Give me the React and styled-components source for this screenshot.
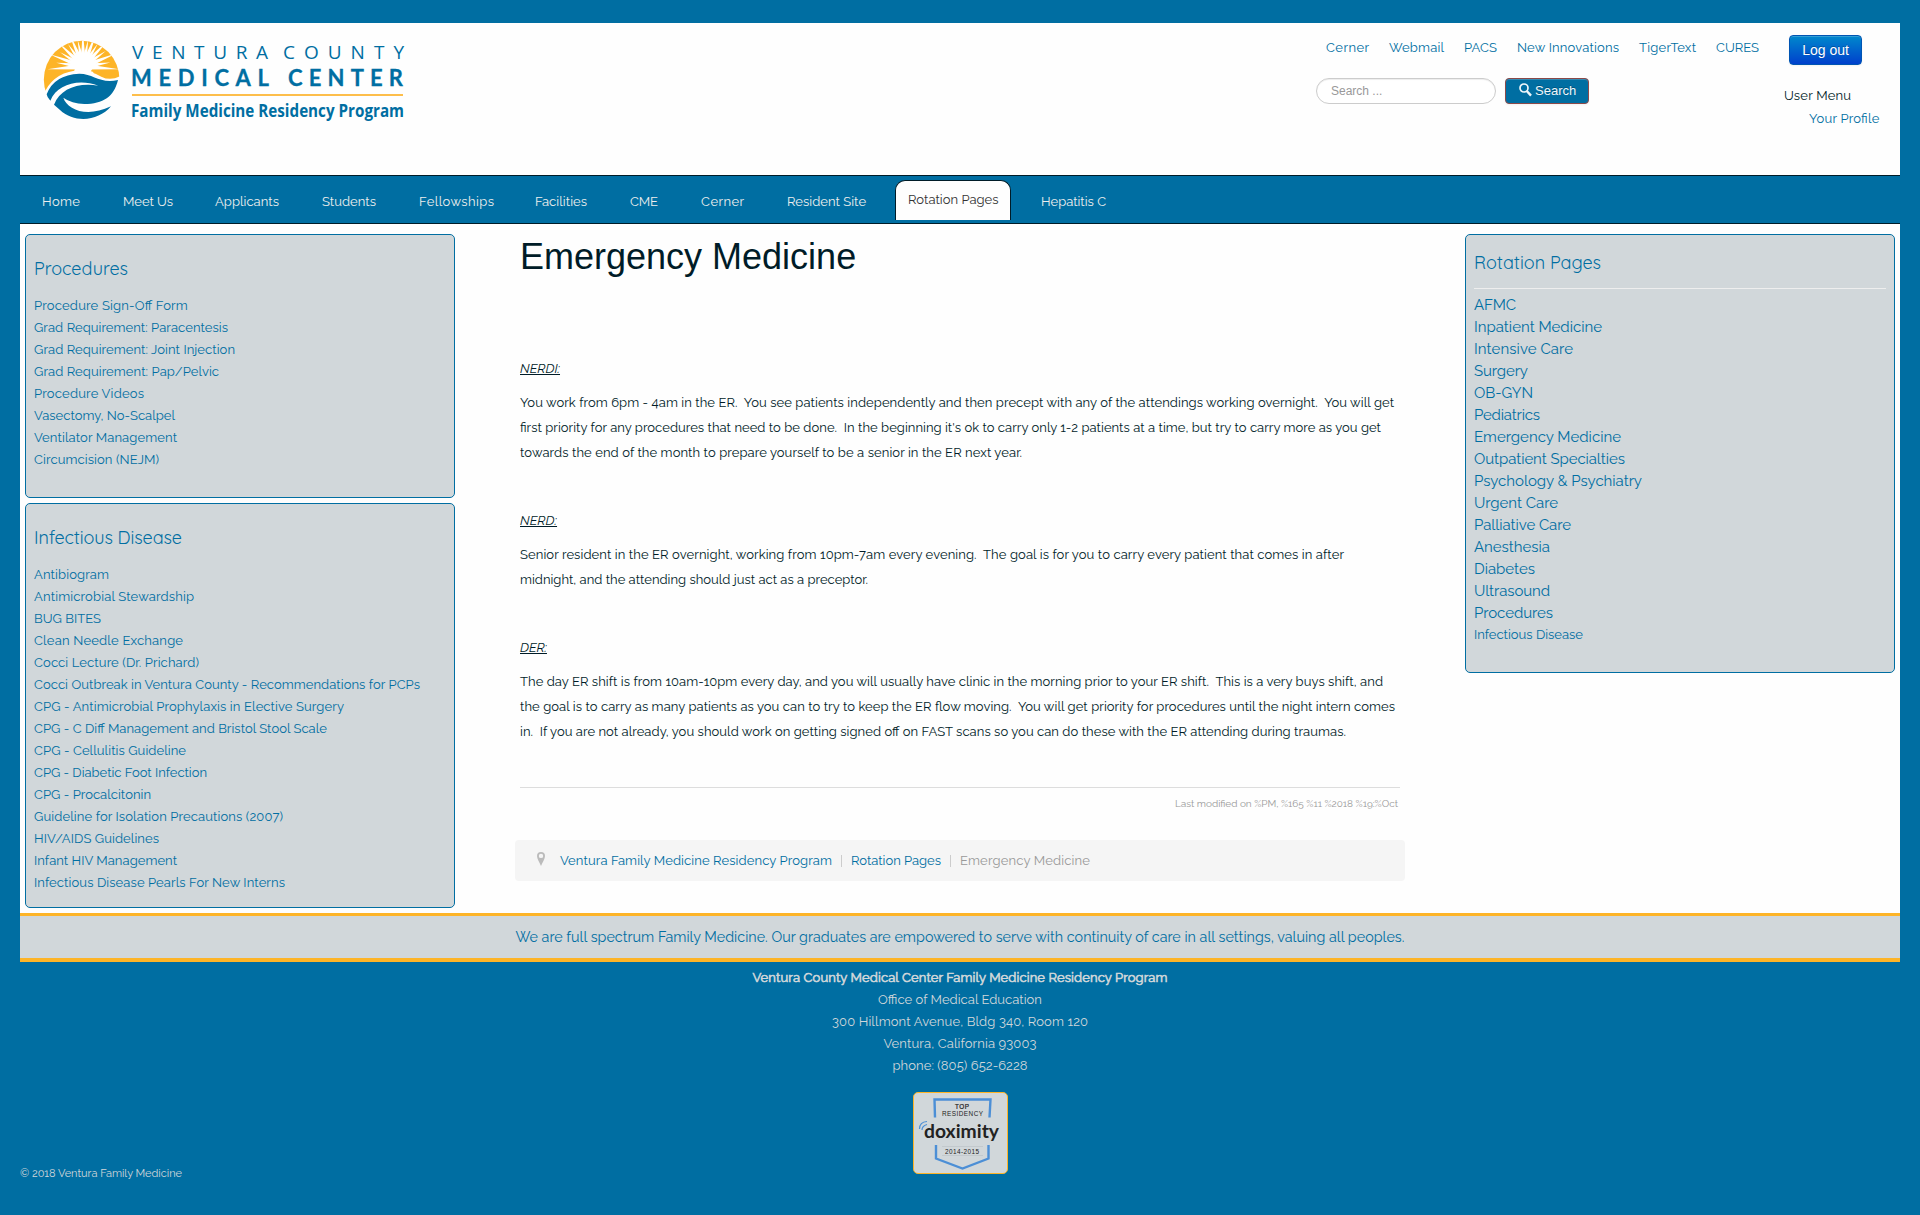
import React, { useLayoutEffect, useRef, useState } from 'react';
import styled, { createGlobalStyle, css } from 'styled-components';

const blue = '#006ea2';
const panel = '#d1d7da';
const gold = '#fdb427';
const ink = '#001c28';
const sans = "Raleway, Lato, 'Open Sans', sans-serif";
const arial = "'Liberation Sans', Arial, sans-serif";

const Global = createGlobalStyle`
  * { box-sizing: border-box; }
  html { background: ${blue}; }
  body { margin: 0; background: ${blue}; color: ${ink}; font: 13px/22px ${sans}; }
  h1, h2, p, ul { margin: 0; padding: 0; font-weight: 400; }
  ul { list-style: none; }
  a { color: ${blue}; text-decoration: none; white-space: nowrap; }
`;

const FitSpan = styled.span`
  display: inline-block;
  white-space: pre;
  font-feature-settings: 'liga' 1;
`;

/* Tracks a run of text out (or in) so that it fills a given measure. */
function Fit({ w, children }) {
  const ref = useRef(null);
  const [spacing, setSpacing] = useState(0);
  useLayoutEffect(() => {
    const el = ref.current;
    el.style.letterSpacing = '0px';
    const natural = el.getBoundingClientRect().width;
    const next = (w - natural) / (children.length - 1);
    el.style.letterSpacing = `${next}px`;
    setSpacing(next);
  }, [w, children]);
  return (
    <FitSpan ref={ref} style={{ letterSpacing: spacing, marginRight: -spacing }}>
      {children}
    </FitSpan>
  );
}

const Page = styled.div`
  padding: 23px 20px 0;
  height: 1215px;
  overflow: hidden;
`;

const Header = styled.header`
  display: flex;
  height: 152px;
  background: #fefefe;
`;
const LogoBox = styled.div`
  width: 1296px;
  padding: 12px 0 0 20px;
  svg { display: block; overflow: visible; }
`;
const Tools = styled.div`
  width: 468px;
  padding-top: 13px;
`;
const QuickLinks = styled.nav`
  display: flex;
  gap: 20px;
  padding-left: 10px;
  height: 22px;
  line-height: 24px;
`;
const SearchForm = styled.div`
  display: flex;
  gap: 9px;
  margin-top: 20px;
`;
const SearchInput = styled.input`
  width: 180px;
  height: 26px;
  padding: 0 14px;
  border: 1px solid #ccc;
  border-radius: 14px;
  background: #fff;
  box-shadow: inset 0 1px 1px rgba(0, 0, 0, 0.075);
  font: 12px ${arial};
  &::placeholder { color: #999; }
`;
const SearchButton = styled.button`
  display: flex;
  align-items: center;
  gap: 3px;
  width: 84px;
  height: 26px;
  padding: 0 0 1px 13px;
  border: 1px solid #8c4a4a;
  border-radius: 4px;
  background: ${blue};
  box-shadow: inset 0 1px 0 rgba(255, 255, 255, 0.2), 0 1px 2px rgba(0, 0, 0, 0.05);
  color: #eef6fa;
  font: 13px ${arial};
  text-shadow: 0 -1px 0 rgba(0, 0, 0, 0.25);
  svg { margin-top: -2px; }
`;
const Account = styled.div`
  display: flex;
  flex-direction: column;
  align-items: flex-start;
  padding-top: 12px;
`;
const LogoutButton = styled.button`
  width: 73px;
  height: 30px;
  margin-left: 5px;
  padding: 0;
  border: 1px solid #0055b3;
  border-radius: 4px;
  background: linear-gradient(#0088cc, #0040cc);
  box-shadow: inset 0 1px 0 rgba(255, 255, 255, 0.2), 0 1px 2px rgba(0, 0, 0, 0.05);
  color: #fff;
  font: 14px ${arial};
  text-shadow: 0 -1px 0 rgba(0, 0, 0, 0.25);
`;
const UserMenu = styled.div`
  margin-top: 19px;
  line-height: 23px;
  div + div { padding-left: 25px; }
`;

const MainNav = styled.nav`
  display: flex;
  align-items: flex-start;
  height: 49px;
  padding-left: 22px;
  border-top: 1px solid ${ink};
  border-bottom: 1px solid ${ink};
`;
const NavItem = styled.a`
  display: block;
  margin-right: ${(p) => p.$gap}px;
  padding-top: 15px;
  color: #eee;
  ${(p) =>
    p.$active &&
    css`
      width: 116px;
      height: 40px;
      margin-top: 4px;
      padding: 8px 0 0 12px;
      border: 1px solid ${ink};
      border-bottom: 0;
      border-radius: 10px 10px 0 0;
      background: #fefefe;
      color: #333;
    `}
`;

const Body = styled.main`
  display: grid;
  grid-template-columns: 430px 890px 430px;
  justify-content: space-between;
  height: 689px;
  padding: 10px 5px 0;
  background: #fefefe;
`;
const Column = styled.div`
  display: flex;
  flex-direction: column;
  gap: 5px;
`;
const Panel = styled.section`
  height: ${(p) => p.$h}px;
  padding: ${(p) => (p.$ruled ? 15 : 21)}px 8px 0;
  border: 1px solid ${blue};
  border-radius: 5px;
  background: ${panel};
`;
const PanelTitle = styled.h2`
  height: ${(p) => (p.$ruled ? 39 : 38)}px;
  margin-bottom: ${(p) => (p.$ruled ? 4 : 0)}px;
  border-bottom: ${(p) => (p.$ruled ? '1px solid #eee' : '0')};
  color: ${blue};
  font-family: Quicksand, Lato, sans-serif;
  font-size: 18px;
  line-height: 26px;
`;
const Item = styled.li`
  height: 22px;
  font-size: ${(p) => (p.$large ? 15 : 13)}px;
  line-height: 24px;
`;

const Article = styled.article`
  padding: 0 5px;
`;
const Title = styled.h1`
  height: 122px;
  color: ${ink};
  font: 36px/45px ${arial};
`;
const Shift = styled.h2`
  margin-top: ${(p) => (p.$first ? 0 : 43)}px;
  font-size: 13px;
  font-style: italic;
  line-height: 25px;
  span { text-decoration: underline; }
`;
const Para = styled.p`
  padding-top: 9px;
  line-height: 25px;
`;
const Line = styled.span`
  display: block;
  height: 25px;
`;
const Modified = styled.div`
  height: 28px;
  margin-top: 43px;
  padding: 5px 2px 0 0;
  border-top: 1px solid #ddd;
  color: #999;
  font-size: 10px;
  text-align: right;
`;
const Crumbs = styled.div`
  display: flex;
  align-items: center;
  height: 41px;
  margin: 25px -5px 0;
  padding: 1px 0 0 22px;
  border-radius: 4px;
  background: #f5f5f5;
  color: #999;
  svg { margin: -5px 15px 0 0; }
`;
const Bar = styled.i`
  width: 1px;
  height: 12px;
  margin: 0 9px;
  background: #ccc;
`;

const Motto = styled.div`
  height: 49px;
  border-top: 3px solid ${gold};
  border-bottom: 4px solid ${gold};
  background: ${panel};
  color: ${blue};
  font-size: 14.3px;
  line-height: 42px;
  text-align: center;
`;
const Address = styled.address`
  padding-top: 5px;
  color: #d1d7da;
  font-style: normal;
  text-align: center;
`;
const Program = styled.div`
  -webkit-text-stroke: 0.6px #d1d7da;
`;
const Badge = styled.div`
  width: 95px;
  height: 82px;
  margin: 15px auto 0;
  border: 1px solid ${gold};
  border-radius: 5px;
  background: ${panel};
  svg { display: block; }
`;
const Copyright = styled.div`
  margin-top: -11px;
  color: #d1d7da;
  font-size: 11px;
`;

const rayAngles = [-4, 9, 22, 35, 47, 58, 69, 80, 91, 102, 113, 124, 136, 148, 160, 172, 184];

function Logo() {
  return (
    <svg width="390" height="100" viewBox="40 35 390 100">
      <svg x="30" y="30" width="100" height="100" viewBox="0 0 300 300">
        <clipPath id="disc"><ellipse cx="155" cy="149" rx="113.5" ry="117" /></clipPath>
        <g clipPath="url(#disc)">
          <path d="M30 20H280V133Q245 156 214 140Q182 122 150 121Q78 124 46 182H30Z" fill={gold} />
          <circle cx="160" cy="106" r="29" fill="#fff" />
          {rayAngles.map((a, i) => (
            <path
              key={a}
              transform={`translate(160 110) rotate(${-a})`}
              d={`M10 -8L${i % 2 ? 82 : 108} 0L10 8Z`}
              fill="#fff"
            />
          ))}
          <path d="M133 121Q160 112 190 126L190 140H130Z" fill="#fff" />
        </g>
        <path d="M50 193Q72 134 148 131C192 131 208 162 264 150C252 200 220 222 163 222Q125 221 100 203C112 239 170 264 243 229C206 273 135 281 90 240L72 224C91 178 140 157 205 167C145 145 81 163 61 212Q51 202 50 193Z" fill={blue} />
      </svg>
      <g fill={blue} fontFamily="'Open Sans', sans-serif">
        <text x="132" y="59" fontSize="19" textLength="136">VENTURA</text>
        <text x="283" y="59" fontSize="19" textLength="121">COUNTY</text>
        <text x="131" y="86" fontSize="22" fontWeight="700" fontFamily="Lato, sans-serif" stroke={blue} strokeWidth=".3" textLength="138">MEDICAL</text>
        <text x="288" y="86" fontSize="22" fontWeight="700" fontFamily="Lato, sans-serif" stroke={blue} strokeWidth=".3" textLength="115">CENTER</text>
        <text x="131" y="117" fontSize="17" fontWeight="700" textLength="273" lengthAdjust="spacingAndGlyphs">Family Medicine Residency Program</text>
      </g>
      <path d="M132 94H403V96H132Z" fill="#fdbe4b" />
    </svg>
  );
}

function Doximity() {
  return (
    <svg width="93" height="80" viewBox="914 1093 93 80">
      <g fill="none" stroke="#4c8fd6" strokeWidth="2.4">
        <path d="M935 1117.500L934.500 1099.500H990.500L989.500 1117.500" />
        <path d="M936 1145V1158.500L962.500 1168.500L988.500 1158.500V1145" />
        <path d="M919.500 1129Q919.500 1122 927 1121.500M922 1130Q922 1126 927 1124.500" strokeWidth="1.2" />
      </g>
      <g fill="#222" textAnchor="middle" fontFamily="'Liberation Sans', Arial, sans-serif" fontSize="6.4">
        <text x="962" y="1109" stroke="#222" strokeWidth=".2" textLength="14">TOP</text>
        <text x="962.500" y="1116.300" textLength="41">RESIDENCY</text>
        <text x="962" y="1153.800" textLength="34">2014-2015</text>
      </g>
      <text x="924" y="1138" fontSize="19.5" fontWeight="700" fontFamily="Lato, sans-serif" fill="#222" textLength="75" lengthAdjust="spacingAndGlyphs">doximity</text>
      <path d="M942 1155.500H983M942 1146.500H983" stroke="#b9c0c4" strokeWidth=".6" />
    </svg>
  );
}

const quick = [['Cerner', 43], ['Webmail', 55], ['PACS', 33], ['New Innovations', 102], ['TigerText', 57], ['CURES', 43]];
const nav = [
  ['Home', 38, 43], ['Meet Us', 50, 42], ['Applicants', 64, 43], ['Students', 54, 43],
  ['Fellowships', 75, 41], ['Facilities', 52, 43], ['CME', 28, 43], ['Cerner', 43, 43],
  ['Resident Site', 79, 29], ['Rotation Pages', 90.5, 30, true], ['Hepatitis C', 65, 0],
];
const procedures = [
  ['Procedure Sign-Off Form', 154], ['Grad Requirement: Paracentesis', 194],
  ['Grad Requirement: Joint Injection', 201], ['Grad Requirement: Pap/Pelvic', 185],
  ['Procedure Videos', 110], ['Vasectomy, No-Scalpel', 141], ['Ventilator Management', 143],
  ['Circumcision (NEJM)', 125],
];
const infectious = [
  ['Antibiogram', 75], ['Antimicrobial Stewardship', 160], ['BUG BITES', 67],
  ['Clean Needle Exchange', 149], ['Cocci Lecture (Dr. Prichard)', 165],
  ['Cocci Outbreak in Ventura County - Recommendations for PCPs', 386],
  ['CPG - Antimicrobial Prophylaxis in Elective Surgery', 310],
  ['CPG - C Diff Management and Bristol Stool Scale', 293], ['CPG - Cellulitis Guideline', 152],
  ['CPG - Diabetic Foot Infection', 173], ['CPG - Procalcitonin', 117],
  ['Guideline for Isolation Precautions (2007)', 249], ['HIV/AIDS Guidelines', 125],
  ['Infant HIV Management', 143], ['Infectious Disease Pearls For New Interns', 251],
];
const rotations = [
  ['AFMC', 42], ['Inpatient Medicine', 128], ['Intensive Care', 99], ['Surgery', 54], ['OB-GYN', 59],
  ['Pediatrics', 66], ['Emergency Medicine', 147], ['Outpatient Specialties', 151],
  ['Psychology & Psychiatry', 168], ['Urgent Care', 84], ['Palliative Care', 97], ['Anesthesia', 76],
  ['Diabetes', 61], ['Ultrasound', 76], ['Procedures', 79], ['Infectious Disease', 109],
];
const shifts = [
  {
    name: 'NERDI:', w: 40,
    lines: [
      ['You work from 6pm - 4am in the ER.  You see patients independently and then precept with any of the attendings working overnight.  You will get', 874],
      ["first priority for any procedures that need to be done.  In the beginning it's ok to carry only 1-2 patients at a time, but try to carry more as you get", 861],
      ['towards the end of the month to prepare yourself to be a senior in the ER next year.', 502],
    ],
  },
  {
    name: 'NERD:', w: 37,
    lines: [
      ['Senior resident in the ER overnight, working from 10pm-7am every evening.  The goal is for you to carry every patient that comes in after', 824],
      ['midnight, and the attending should just act as a preceptor.', 348],
    ],
  },
  {
    name: 'DER:', w: 27,
    lines: [
      ['The day ER shift is from 10am-10pm every day, and you will usually have clinic in the morning prior to your ER shift.  This is a very buys shift, and', 863],
      ['the goal is to carry as many patients as you can to try to keep the ER flow moving.  You will get priority for procedures until the night intern comes', 875],
      ['in.  If you are not already, you should work on getting signed off on FAST scans so you can do these with the ER attending during traumas.', 826],
    ],
  },
];
const address = [
  ['Office of Medical Education', 164], ['300 Hillmont Avenue, Bldg 340, Room 120', 256],
  ['Ventura, California 93003', 153], ['phone: (805) 652-6228', 135],
];

function LinkPanel({ title, titleWidth, items, height, ruled }) {
  return (
    <Panel $h={height} $ruled={ruled}>
      <PanelTitle $ruled={ruled}><Fit w={titleWidth}>{title}</Fit></PanelTitle>
      <ul>
        {items.map(([t, w], i) => (
          <Item key={t} $large={ruled && i < items.length - 1}><a href="#"><Fit w={w}>{t}</Fit></a></Item>
        ))}
      </ul>
    </Panel>
  );
}

export default function App() {
  return (
    <Page>
      <Global />
      <Header>
        <LogoBox><Logo /></LogoBox>
        <Tools>
          <QuickLinks>
            {quick.map(([t, w]) => <a key={t} href="#"><Fit w={w}>{t}</Fit></a>)}
          </QuickLinks>
          <SearchForm>
            <SearchInput placeholder="Search ..." />
            <SearchButton>
              <svg width="13" height="14" viewBox="0 0 13 14" fill="none" stroke="#eef6fa">
                <circle cx="5" cy="5" r="4" strokeWidth="1.700" />
                <path d="M7.800 8L12 12.600" strokeWidth="2.400" />
              </svg>
              Search
            </SearchButton>
          </SearchForm>
        </Tools>
        <Account>
          <LogoutButton>Log out</LogoutButton>
          <UserMenu>
            <div><Fit w={67}>User Menu</Fit></div>
            <div><a href="#"><Fit w={70.5}>Your Profile</Fit></a></div>
          </UserMenu>
        </Account>
      </Header>
      <MainNav>
        {nav.map(([t, w, gap, active], i) => (
          <NavItem key={i} href="#" $gap={gap} $active={active}><Fit w={w}>{t}</Fit></NavItem>
        ))}
      </MainNav>
      <Body>
        <Column>
          <LinkPanel title="Procedures" titleWidth={94} items={procedures} height={264} />
          <LinkPanel title="Infectious Disease" titleWidth={148} items={infectious} height={405} />
        </Column>
        <Article>
          <Title>Emergency Medicine</Title>
          {shifts.map((s, i) => (
            <React.Fragment key={s.name}>
              <Shift $first={i === 0}><Fit w={s.w}>{s.name}</Fit></Shift>
              <Para>
                {s.lines.map(([t, w]) => <Line key={t}><Fit w={w}>{t}</Fit></Line>)}
              </Para>
            </React.Fragment>
          ))}
          <Modified><Fit w={223}>Last modified on %PM, %165 %11 %2018 %19:%Oct</Fit></Modified>
          <Crumbs>
            <svg width="8" height="14" viewBox="0 0 8 14">
              <path fillRule="evenodd" d="M4 0A4 4 0 0 1 8 4C8 7 5.500 10 4 14C2.500 10 0 7 0 4A4 4 0 0 1 4 0ZM4 1.700A2.200 2.200 0 0 0 4 6.100A2.200 2.200 0 0 0 4 1.700Z" fill="#bbb" />
            </svg>
            <a href="#"><Fit w={272}>Ventura Family Medicine Residency Program</Fit></a>
            <Bar />
            <a href="#"><Fit w={90}>Rotation Pages</Fit></a>
            <Bar />
            <Fit w={130}>Emergency Medicine</Fit>
          </Crumbs>
        </Article>
        <Column>
          <LinkPanel title="Rotation Pages" titleWidth={127} items={rotations} height={439} ruled />
        </Column>
      </Body>
      <Motto><Fit w={889}>We are full spectrum Family Medicine. Our graduates are empowered to serve with continuity of care in all settings, valuing all peoples.</Fit></Motto>
      <Address>
        <Program><Fit w={415}>Ventura County Medical Center Family Medicine Residency Program</Fit></Program>
        {address.map(([t, w]) => <div key={t}><Fit w={w}>{t}</Fit></div>)}
      </Address>
      <Badge><Doximity /></Badge>
      <Copyright><Fit w={162}>© 2018 Ventura Family Medicine</Fit></Copyright>
    </Page>
  );
}
